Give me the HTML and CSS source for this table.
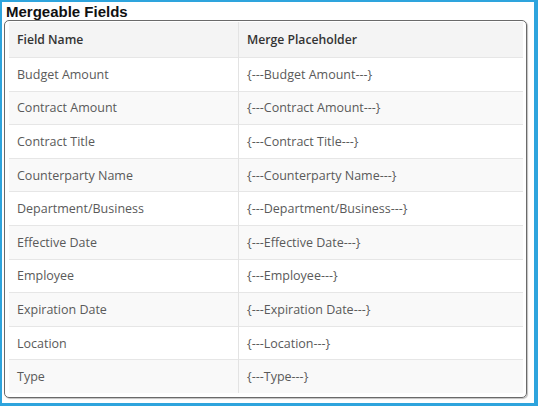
FILE: index.html
```html
<!DOCTYPE html>
<html>
<head>
<meta charset="utf-8">
<link rel="stylesheet" href="styles.css">
</head>
<body>
<div class="frame">
  <div class="title">Mergeable Fields</div>
  <div class="box">
    <table class="fields">
      <thead>
        <tr><th class="c1">Field Name</th><th class="c2">Merge Placeholder</th></tr>
      </thead>
      <tbody>
        <tr><td>Budget Amount</td><td>{---Budget Amount---}</td></tr>
        <tr><td>Contract Amount</td><td>{---Contract Amount---}</td></tr>
        <tr><td>Contract Title</td><td>{---Contract Title---}</td></tr>
        <tr><td>Counterparty Name</td><td>{---Counterparty Name---}</td></tr>
        <tr><td>Department/Business</td><td>{---Department/Business---}</td></tr>
        <tr><td>Effective Date</td><td>{---Effective Date---}</td></tr>
        <tr><td>Employee</td><td>{---Employee---}</td></tr>
        <tr><td>Expiration Date</td><td>{---Expiration Date---}</td></tr>
        <tr><td>Location</td><td>{---Location---}</td></tr>
        <tr><td>Type</td><td>{---Type---}</td></tr>
      </tbody>
    </table>
  </div>
</div>
</body>
</html>
```
FILE: styles.css
```css
html, body { margin: 0; padding: 0; background: #fff; }
.frame {
  width: 538px; height: 406px; box-sizing: border-box;
  border-style: solid; border-color: #2ea4dd;
  border-width: 2px 4px 3px 2px;
  background: #fff;
  display: flex; flex-direction: column;
}
.title {
  font-family: "Liberation Sans", Arial, sans-serif;
  font-weight: bold; font-size: 15px; line-height: 19px;
  color: #111; padding-left: 4px; height: 18px;
}
.box {
  flex: 1;
  margin: 0 7px 5px 2px;
  border: 1px solid #6a6a6a;
  border-radius: 5px;
  box-shadow: 1px 1px 1px rgba(0,0,0,0.25);
  padding: 1px 3px 4px 4px;
}
.fields {
  width: 100%; border-collapse: collapse; table-layout: fixed;
  font-family: "Open Sans", sans-serif; font-size: 12.5px; color: #5a5a5a;
}
.fields th, .fields td {
  text-align: left; padding: 0 0 0 8px; vertical-align: middle;
  border-top: 1px solid #e6e6e6;
}
.fields th + th, .fields td + td { border-left: 1px solid #e3e3e3; }
.fields .c1 { width: 221px; }
.fields thead th {
  height: 35px; background: #f4f4f4; color: #333; font-weight: 600;
  font-size: 12.2px; border-top: none;
}
.fields tbody td { height: 32.6px; }
.fields tbody tr:nth-child(even) td { background: #f9f9f9; }
```
